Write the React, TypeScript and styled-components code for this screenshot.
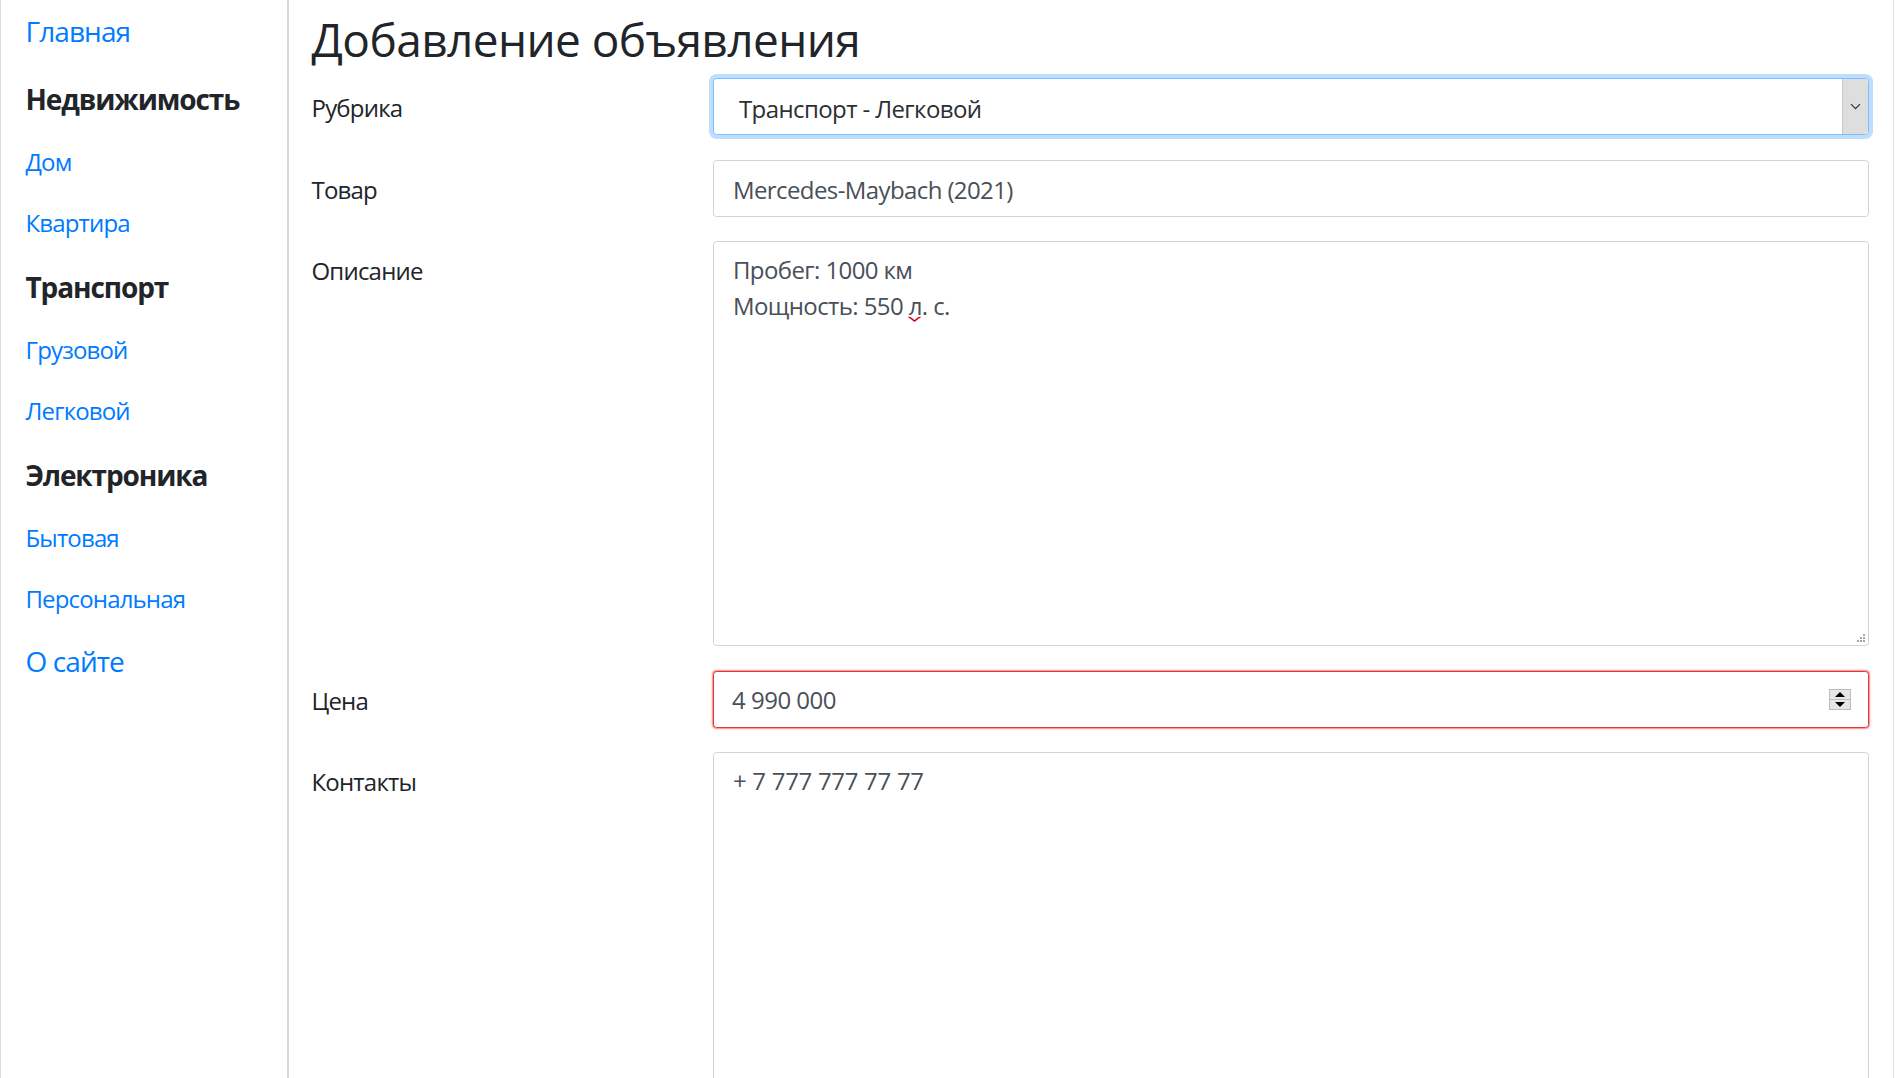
import React from "react";
import styled, { createGlobalStyle, css } from "styled-components";

const Global = createGlobalStyle`
  html, body { margin: 0; padding: 0; background: #fff; }
  body { font-family: "Segoe UI", "Open Sans", sans-serif; color: #212529; }
  #root { height: 1078px; overflow: hidden; }
`;

const Page = styled.div`
  display: flex;
  box-sizing: border-box;
  width: 1894px;
  height: 1078px;
  border-left: 1px solid #dcdcdc;
  border-right: 1px solid #e4e4e4;
`;

const Nav = styled.nav`
  width: 288px;
  flex-shrink: 0;
  box-sizing: border-box;
  border-right: 2px solid #d9d9d9;
  padding-left: 24.5px;
  display: flex;
  flex-direction: column;
`;

const NavLink = styled.a<{ $big?: boolean }>`
  display: block;
  height: ${(p) => (p.$big ? 62 : 61)}px;
  line-height: ${(p) => (p.$big ? 62 : 60)}px;
  font-size: ${(p) => (p.$big ? 28 : 24)}px;
  letter-spacing: ${(p) => (p.$big ? -0.9 : -0.85)}px;
  color: #007bff;
  text-decoration: none;
  white-space: nowrap;
  &:first-child { margin-bottom: 4px; }
`;

const NavHeading = styled.div`
  height: 66px;
  line-height: 66px;
  font-size: 28px;
  font-weight: 700;
  letter-spacing: -1.1px;
  color: #212529;
  white-space: nowrap;
`;

const Main = styled.main`
  flex: 1;
  min-width: 0;
  padding: 9px 24px 0 22.5px;
`;

const Title = styled.h1`
  margin: 0 0 9px;
  font-size: 46px;
  line-height: 60px;
  font-weight: 400;
  letter-spacing: -0.6px;
  color: #212529;
  white-space: nowrap;
`;

const Form = styled.form`
  display: grid;
  grid-template-columns: 401.5px 1fr;
  row-gap: 24.5px;
`;

const Label = styled.label`
  font-size: 24px;
  line-height: 36px;
  padding-top: 12px;
  letter-spacing: -0.8px;
  color: #212529;
`;

const fieldBase = css`
  box-sizing: border-box;
  width: 100%;
  border: 1px solid #ced4da;
  border-radius: 3.6px;
  background: #fff;
  font-family: inherit;
  font-size: 24px;
  letter-spacing: -0.6px;
  color: #495057;
`;

const TextInput = styled.input`
  ${fieldBase};
  height: 57px;
  padding: 2px 19px 0;
  line-height: 36px;
  outline: none;
`;

const SelectBox = styled.div`
  ${fieldBase};
  height: 57px;
  display: flex;
  border-color: #80bdff;
  box-shadow: 0 0 0 4px rgba(0, 123, 255, 0.25);
  overflow: hidden;
`;

const SelectValue = styled.div`
  flex: 1;
  padding: 3px 0 0 25px;
  line-height: 53px;
  color: #2b2f33;
`;

const ArrowBox = styled.div`
  width: 25px;
  background: #dedede;
  border-left: 1px solid #cacaca;
  display: flex;
  align-items: center;
  justify-content: center;
`;

const TextArea = styled.div<{ $h: number }>`
  ${fieldBase};
  position: relative;
  height: ${(p) => p.$h}px;
  padding: 9.5px 19px 0;
  line-height: 36px;
`;

const Line = styled.div<{ $ls?: number }>`
  white-space: pre;
  ${(p) => (p.$ls !== undefined ? `letter-spacing: ${p.$ls}px;` : "")}
`;

const Spell = styled.span`
  position: relative;
`;

const Squiggle = styled.svg`
  position: absolute;
  left: -0.5px;
  top: calc(100% - 6px);
  overflow: visible;
`;

const Grip = styled.svg`
  position: absolute;
  right: 2px;
  bottom: 2px;
`;

const PriceBox = styled.div`
  ${fieldBase};
  height: 57px;
  display: flex;
  align-items: center;
  border-color: #e5343a;
  box-shadow: 0 0 1.5px 1px rgba(235, 40, 40, 0.55);
  padding-right: 17px;
`;

const PriceInput = styled.input`
  flex: 1;
  min-width: 0;
  border: none;
  outline: none;
  background: transparent;
  font-family: inherit;
  font-size: 24px;
  letter-spacing: -0.5px;
  color: #495057;
  padding: 2px 18px 0;
  line-height: 36px;
`;

const Spinner = styled.div`
  width: 22px;
  height: 21px;
  box-sizing: border-box;
  border: 1px solid #bdbdbd;
  background: #e6e6e6;
  display: flex;
  flex-direction: column;
`;

const SpinHalf = styled.div<{ $top?: boolean }>`
  flex: 1;
  display: flex;
  align-items: center;
  justify-content: center;
  ${(p) => (p.$top ? "border-bottom: 1px solid #bdbdbd;" : "")}
`;

const Triangle = styled.div<{ $up?: boolean }>`
  width: 0;
  height: 0;
  border-left: 5px solid transparent;
  border-right: 5px solid transparent;
  ${(p) => (p.$up ? "border-bottom: 5px solid #000;" : "border-top: 5px solid #000;")}
`;

const GripIcon = () => (
  <Grip width="10" height="10" viewBox="0 0 10 10">
    {[
      [8, 2],
      [5, 5],
      [8, 5],
      [2, 8],
      [5, 8],
      [8, 8],
    ].map(([x, y]) => (
      <rect key={`${x}-${y}`} x={x - 1} y={y - 1} width="2" height="2" fill="#a8a8a8" />
    ))}
  </Grip>
);

export default function App() {
  return (
    <>
      <Global />
      <Page>
        <Nav>
          <NavLink $big href="#">Главная</NavLink>
          <NavHeading>Недвижимость</NavHeading>
          <NavLink href="#">Дом</NavLink>
          <NavLink href="#">Квартира</NavLink>
          <NavHeading>Транспорт</NavHeading>
          <NavLink href="#">Грузовой</NavLink>
          <NavLink href="#">Легковой</NavLink>
          <NavHeading>Электроника</NavHeading>
          <NavLink href="#">Бытовая</NavLink>
          <NavLink href="#">Персональная</NavLink>
          <NavLink $big href="#">О сайте</NavLink>
        </Nav>
        <Main>
          <Title>Добавление объявления</Title>
          <Form onSubmit={(e) => e.preventDefault()}>
            <Label>Рубрика</Label>
            <SelectBox>
              <SelectValue>Транспорт - Легковой</SelectValue>
              <ArrowBox>
                <svg width="11" height="7" viewBox="0 0 11 7">
                  <path d="M1 1.2l4.5 4.5 4.5-4.5" fill="none" stroke="#333" strokeWidth="1.2" />
                </svg>
              </ArrowBox>
            </SelectBox>

            <Label>Товар</Label>
            <TextInput type="text" defaultValue="Mercedes-Maybach (2021)" />

            <Label>Описание</Label>
            <TextArea $h={405}>
              <Line>Пробег: 1000 км</Line>
              <Line>
                Мощность: 550{" "}
                <Spell>
                  л
                  <Squiggle width="13" height="6" viewBox="0 0 13 6">
                    <path
                      d="M0.5 1.2 Q2 1.2 3.5 2.6 L6.5 5 L9.5 2.6 Q11 1.2 12.5 1.2"
                      fill="none"
                      stroke="#d0021b"
                      strokeWidth="1.5"
                    />
                  </Squiggle>
                </Spell>
                . с.
              </Line>
              <GripIcon />
            </TextArea>

            <Label>Цена</Label>
            <PriceBox>
              <PriceInput type="text" defaultValue="4 990 000" />
              <Spinner>
                <SpinHalf $top>
                  <Triangle $up />
                </SpinHalf>
                <SpinHalf>
                  <Triangle />
                </SpinHalf>
              </Spinner>
            </PriceBox>

            <Label>Контакты</Label>
            <TextArea $h={405}>
              <Line $ls={-0.3}>+ 7 777 777 77 77</Line>
            </TextArea>
          </Form>
        </Main>
      </Page>
    </>
  );
}
